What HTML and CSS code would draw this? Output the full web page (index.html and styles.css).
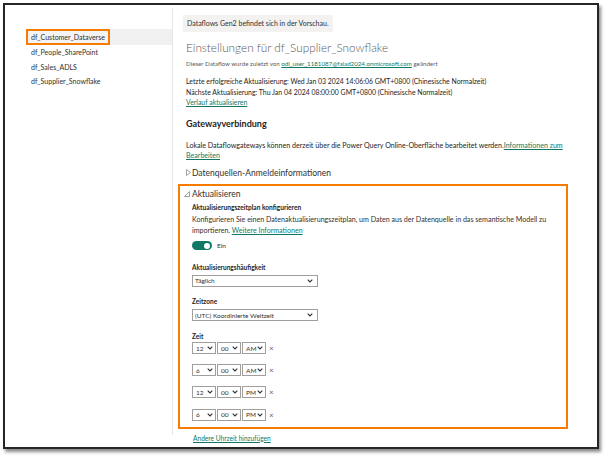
FILE: index.html
```html
<!DOCTYPE html>
<html lang="de">
<head>
<meta charset="utf-8">
<title>Einstellungen</title>
<link rel="stylesheet" href="styles.css">
</head>
<body>
<div class="frame">
  <nav class="sidebar">
    <div class="item selected"><span class="mark">df_Customer_Dataverse</span></div>
    <div class="item">df_People_SharePoint</div>
    <div class="item">df_Sales_ADLS</div>
    <div class="item">df_Supplier_Snowflake</div>
  </nav>
  <main class="main">
    <div class="banner">Dataflows Gen2 befindet sich in der Vorschau.</div>
    <h1 class="title">Einstellungen für df_Supplier_Snowflake</h1>
    <p class="modified">Dieser Dataflow wurde zuletzt von <a class="link">odl_user_1181087@faiad2024.onmicrosoft.com</a> geändert</p>
    <p class="info">Letzte erfolgreiche Aktualisierung: Wed Jan 03 2024 14:06:06 GMT+0800 (Chinesische Normalzeit)<br>Nächste Aktualisierung: Thu Jan 04 2024 08:00:00 GMT+0800 (Chinesische Normalzeit)<br><a class="link">Verlauf aktualisieren</a></p>
    <h2 class="section">Gatewayverbindung</h2>
    <p class="info gw">Lokale Dataflowgateways können derzeit über die Power Query Online-Oberfläche bearbeitet werden.<a class="link">Informationen zum Bearbeiten</a></p>
    <div class="expander"><svg class="tri" width="5" height="7" viewBox="0 0 5 7"><path d="M0.5 0.5 L4.5 3.5 L0.5 6.5 Z" fill="none" stroke="#8a8886" stroke-width="0.8"/></svg>Datenquellen-Anmeldeinformationen</div>
    <section class="refresh">
      <div class="expander open"><svg class="tri" width="6" height="6" viewBox="0 0 6 6"><path d="M5.5 0.5 L5.5 5.5 L0.5 5.5 Z" fill="none" stroke="#8a8886" stroke-width="0.8"/></svg>Aktualisieren</div>
      <div class="body">
        <h3 class="sub">Aktualisierungszeitplan konfigurieren</h3>
        <p class="desc">Konfigurieren Sie einen Datenaktualisierungszeitplan, um Daten aus der Datenquelle in das semantische Modell zu importieren. <a class="link">Weitere Informationen</a></p>
        <div class="toggle-row"><span class="toggle"><span class="knob"></span></span><span class="on">Ein</span></div>
        <div class="label">Aktualisierungshäufigkeit</div>
        <div class="select wide"><span>Täglich</span><svg width="6" height="4" viewBox="0 0 6 4"><path d="M0.7 0.7 L3 3 L5.3 0.7" fill="none" stroke="#323130" stroke-width="1.1"/></svg></div>
        <div class="label">Zeitzone</div>
        <div class="select wide"><span>(UTC) Koordinierte Weltzeit</span><svg width="6" height="4" viewBox="0 0 6 4"><path d="M0.7 0.7 L3 3 L5.3 0.7" fill="none" stroke="#323130" stroke-width="1.1"/></svg></div>
        <div class="label">Zeit</div>
        <div class="times">
          <div class="time-row">
            <div class="select s"><span>12</span><svg width="6" height="4" viewBox="0 0 6 4"><path d="M0.7 0.7 L3 3 L5.3 0.7" fill="none" stroke="#323130" stroke-width="1.1"/></svg></div>
            <div class="select s"><span>00</span><svg width="6" height="4" viewBox="0 0 6 4"><path d="M0.7 0.7 L3 3 L5.3 0.7" fill="none" stroke="#323130" stroke-width="1.1"/></svg></div>
            <div class="select s"><span>AM</span><svg width="6" height="4" viewBox="0 0 6 4"><path d="M0.7 0.7 L3 3 L5.3 0.7" fill="none" stroke="#323130" stroke-width="1.1"/></svg></div>
            <span class="x">×</span>
          </div>
          <div class="time-row">
            <div class="select s"><span>6</span><svg width="6" height="4" viewBox="0 0 6 4"><path d="M0.7 0.7 L3 3 L5.3 0.7" fill="none" stroke="#323130" stroke-width="1.1"/></svg></div>
            <div class="select s"><span>00</span><svg width="6" height="4" viewBox="0 0 6 4"><path d="M0.7 0.7 L3 3 L5.3 0.7" fill="none" stroke="#323130" stroke-width="1.1"/></svg></div>
            <div class="select s"><span>AM</span><svg width="6" height="4" viewBox="0 0 6 4"><path d="M0.7 0.7 L3 3 L5.3 0.7" fill="none" stroke="#323130" stroke-width="1.1"/></svg></div>
            <span class="x">×</span>
          </div>
          <div class="time-row">
            <div class="select s"><span>12</span><svg width="6" height="4" viewBox="0 0 6 4"><path d="M0.7 0.7 L3 3 L5.3 0.7" fill="none" stroke="#323130" stroke-width="1.1"/></svg></div>
            <div class="select s"><span>00</span><svg width="6" height="4" viewBox="0 0 6 4"><path d="M0.7 0.7 L3 3 L5.3 0.7" fill="none" stroke="#323130" stroke-width="1.1"/></svg></div>
            <div class="select s"><span>PM</span><svg width="6" height="4" viewBox="0 0 6 4"><path d="M0.7 0.7 L3 3 L5.3 0.7" fill="none" stroke="#323130" stroke-width="1.1"/></svg></div>
            <span class="x">×</span>
          </div>
          <div class="time-row">
            <div class="select s"><span>6</span><svg width="6" height="4" viewBox="0 0 6 4"><path d="M0.7 0.7 L3 3 L5.3 0.7" fill="none" stroke="#323130" stroke-width="1.1"/></svg></div>
            <div class="select s"><span>00</span><svg width="6" height="4" viewBox="0 0 6 4"><path d="M0.7 0.7 L3 3 L5.3 0.7" fill="none" stroke="#323130" stroke-width="1.1"/></svg></div>
            <div class="select s"><span>PM</span><svg width="6" height="4" viewBox="0 0 6 4"><path d="M0.7 0.7 L3 3 L5.3 0.7" fill="none" stroke="#323130" stroke-width="1.1"/></svg></div>
            <span class="x">×</span>
          </div>
        </div>
      </div>
    </section>
    <a class="link add">Andere Uhrzeit hinzufügen</a>
  </main>
</div>
</body>
</html>
```
FILE: styles.css
```css
* { box-sizing: border-box; }
html, body { margin: 0; padding: 0; background: #ffffff; }
body {
  font-family: Lato, "Noto Sans", sans-serif;
  color: #323130;
  width: 608px;
  height: 458px;
  overflow: hidden;
}
.frame {
  margin: 3px 0 0 3px;
  width: 596px;
  height: 446px;
  border: 2px solid #262626;
  box-shadow: 2px 3px 3px rgba(0, 0, 0, 0.45);
  display: flex;
  background: #fff;
}
.sidebar {
  width: 168px;
  flex: none;
  margin: 3px 0 12px 0;
  padding-top: 21px;
  border-right: 1px solid #e6e6e6;
}
.item {
  margin-left: 21px;
  height: 15px;
  line-height: 15px;
  padding-left: 5px;
  font-size: 7px;
  color: #323130;
  white-space: nowrap;
}
.item + .item { height: 14.5px; }
.item.selected {
  background: #f0f0f0;
  padding-left: 0;
  height: 16px;
}
.mark {
  display: inline-block;
  height: 16px;
  border: 2px solid #f57c00;
  padding: 0 3px;
  line-height: 12px;
  background: #f3f3f3;
}
.main {
  flex: 1;
  padding: 5px 0 0 13px;
  min-width: 0;
}
.banner {
  display: inline-block;
  margin-left: -3px;
  background: #f3f2f1;
  height: 17px;
  line-height: 17px;
  padding: 0 4px;
  font-size: 7px;
  color: #323130;
}
.title {
  margin: 8px 0 0 0;
  font-weight: 300;
  font-size: 11.75px;
  line-height: 16px;
  color: #5a5856;
}
.modified {
  margin: 3px 0 0 0;
  font-size: 6.2px;
  line-height: 9px;
  color: #605e5c;
}
.link {
  color: #117865;
  text-decoration: underline;
  text-underline-offset: 1px;
}
.info {
  margin: 8px 0 0 0;
  font-size: 6.9px;
  line-height: 10.5px;
  color: #252423;
}
.section {
  margin: 10px 0 0 0;
  font-size: 9px;
  line-height: 12px;
  font-weight: 700;
  color: #252423;
}
.info.gw {
  margin-top: 11px;
  font-size: 7.1px;
  width: 384px;
}
.expander {
  margin-top: 5px;
  font-size: 8.5px;
  line-height: 12px;
  color: #323130;
  display: flex;
  align-items: center;
  gap: 1px;
}
.refresh {
  margin: 5px 0 0 -8px;
  width: 390px;
  height: 245px;
  border: 2px solid #f57c00;
  padding: 2px 0 0 4px;
}
.expander.open { margin-top: 0; gap: 2px; }
.body { padding-left: 8px; }
.sub {
  margin: 2px 0 0 0;
  font-size: 6.6px;
  line-height: 10px;
  font-weight: 700;
  color: #252423;
}
.desc {
  margin: 2px 0 0 0;
  font-size: 7.1px;
  line-height: 11px;
  width: 372px;
}
.toggle-row {
  margin-top: 5px;
  display: flex;
  align-items: center;
  height: 10px;
}
.toggle {
  width: 20px;
  height: 9px;
  border-radius: 5px;
  background: #117865;
  position: relative;
  display: inline-block;
}
.knob {
  position: absolute;
  right: 2px;
  top: 1.5px;
  width: 6px;
  height: 6px;
  border-radius: 50%;
  background: #fff;
}
.on { font-size: 6.5px; margin-left: 5px; color: #323130; }
.label {
  margin-top: 10.5px;
  font-size: 6.5px;
  line-height: 9px;
  font-weight: 700;
  color: #252423;
}
.toggle-row + .label { margin-top: 12px; }
.select {
  margin-top: 0;
  height: 12px;
  border: 1px solid #a19f9d;
  display: flex;
  align-items: center;
  justify-content: space-between;
  padding: 0 4px 0 2px;
  font-size: 6.5px;
  color: #323130;
  background: #fff;
}
.select.wide { width: 126px; }
.label + .select { margin-top: 3px; }
.times { margin-top: 1.5px; display: flex; flex-direction: column; gap: 10.2px; }
.time-row { display: flex; align-items: center; gap: 1px; }
.select.s { width: 24px; padding: 0 2px 0 3px; }
.x { font-size: 8px; color: #605e5c; margin-left: 2px; line-height: 8px; }
.add {
  display: block;
  margin: 4px 0 0 7px;
  font-size: 6.6px;
  line-height: 10px;
}
```
